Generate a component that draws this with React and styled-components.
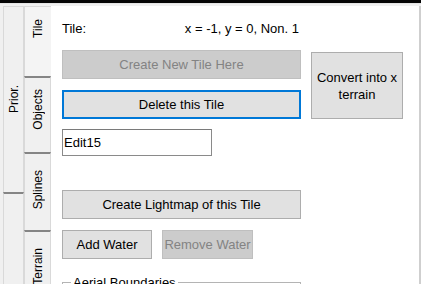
import React from "react";
import styled, { createGlobalStyle } from "styled-components";

const Global = createGlobalStyle`
  html, body { margin: 0; padding: 0; background: #f0f0f0; }
  * { box-sizing: border-box; }
`;

const Window = styled.div`
  width: 421px;
  height: 284px;
  overflow: hidden;
  display: flex;
  flex-direction: column;
  background: #f0f0f0;
  font-family: "Liberation Sans", Arial, sans-serif;
  font-size: 13px;
  color: #000;
`;

const TopBar = styled.div`
  height: 3px;
  background: #050505;
  flex: none;
`;

const Body = styled.div`
  flex: 1;
  display: flex;
  padding-top: 2px;
  border-top: 1px solid #e4e4e4;
  min-height: 0;
`;

const TabColumn = styled.div`
  flex: none;
  width: ${(p) => p.$width}px;
  padding-left: ${(p) => p.$pad || 0}px;
  display: flex;
  flex-direction: column;
`;

const Tab = styled.div`
  flex: ${(p) => (p.$grow ? "1 1 auto" : "none")};
  height: ${(p) => (p.$height ? `${p.$height}px` : "auto")};
  background: ${(p) => (p.$active ? "#f4f4f4" : "#f0f0f0")};
  border-left: 1px solid #d9d9d9;
  border-right: ${(p) => (p.$active ? "none" : "1px solid #d9d9d9")};
  border-top: ${(p) => (p.$first ? "1px solid #d9d9d9" : "2px solid #858585")};
  display: flex;
  align-items: center;
  justify-content: center;
  padding-bottom: ${(p) => p.$shift || 0}px;
`;

const TabLabel = styled.span`
  writing-mode: vertical-rl;
  transform: rotate(180deg);
  font-size: 12px;
  line-height: 14px;
  white-space: nowrap;
`;

const Content = styled.div`
  flex: 1;
  background: #fff;
  border-right: 2px solid #cfcfcf;
  padding: 15px 0 0 11px;
  display: flex;
  flex-direction: column;
  min-width: 0;
  & > * { flex-shrink: 0; }
`;

const TopSection = styled.div`
  display: flex;
  gap: 10px;
  align-items: flex-start;
`;

const LeftCol = styled.div`
  width: 239px;
  display: flex;
  flex-direction: column;
`;

const InfoRow = styled.div`
  height: 15px;
  line-height: 15px;
  display: flex;
  justify-content: space-between;
  padding-right: 2px;
`;

const Button = styled.button`
  font-family: inherit;
  font-size: 13px;
  width: ${(p) => p.$w}px;
  height: ${(p) => p.$h || 29}px;
  margin: ${(p) => p.$mt || 0}px 0 0 0;
  padding: 0;
  line-height: 17px;
  text-align: center;
  background: ${(p) => (p.disabled ? "#cccccc" : "#e1e1e1")};
  color: ${(p) => (p.disabled ? "#838383" : "#000")};
  border: ${(p) =>
    p.$focused ? "2px solid #0078d7" : p.disabled ? "1px solid #bfbfbf" : "1px solid #adadad"};
  border-radius: 0;
  outline: none;
  flex: none;
  align-self: flex-start;
`;

const EditBox = styled.input`
  width: 150px;
  height: 27px;
  margin-top: 10px;
  border: 1px solid #8a8a8a;
  border-top-color: #7a7a7a;
  background: #fff;
  font-family: inherit;
  font-size: 13px;
  padding: 0 0 0 1px;
  color: #000;
  outline: none;
`;

const Row = styled.div`
  display: flex;
  gap: 10px;
  margin-top: ${(p) => p.$mt || 0}px;
`;

const GroupBox = styled.fieldset`
  width: 239px;
  margin: 16px 0 0 0;
  padding: 0 0 20px 8px;
  border: 1px solid #b4b4b4;
  min-height: 40px;
`;

const GroupCaption = styled.legend`
  padding: 0 2px;
  line-height: 15px;
  font-size: 13px;
`;

export default function App() {
  return (
    <>
      <Global />
      <Window>
        <TopBar />
        <Body>
          <TabColumn $width={24} $pad={3}>
            <Tab $first $height={186}>
              <TabLabel>Prior.</TabLabel>
            </Tab>
            <Tab $grow />
          </TabColumn>
          <TabColumn $width={27}>
            <Tab $first $active $height={70} $shift={26}>
              <TabLabel>Tile</TabLabel>
            </Tab>
            <Tab $height={76} $shift={12}>
              <TabLabel>Objects</TabLabel>
            </Tab>
            <Tab $height={78} $shift={4}>
              <TabLabel>Splines</TabLabel>
            </Tab>
            <Tab $height={70}>
              <TabLabel>Terrain</TabLabel>
            </Tab>
          </TabColumn>
          <Content>
            <TopSection>
              <LeftCol>
                <InfoRow>
                  <span>Tile:</span>
                  <span>x = -1, y = 0, Non. 1</span>
                </InfoRow>
                <Button $w={239} $mt={14} disabled>
                  Create New Tile Here
                </Button>
                <Button $w={239} $mt={11} $focused>
                  Delete this Tile
                </Button>
              </LeftCol>
              <Button $w={92} $h={67} $mt={31}>
                Convert into x
                <br />
                terrain
              </Button>
            </TopSection>
            <EditBox readOnly value="Edit15" />
            <Button $w={239} $mt={34}>
              Create Lightmap of this Tile
            </Button>
            <Row $mt={11}>
              <Button $w={90}>Add Water</Button>
              <Button $w={91} disabled>
                Remove Water
              </Button>
            </Row>
            <GroupBox>
              <GroupCaption>Aerial Boundaries</GroupCaption>
            </GroupBox>
          </Content>
        </Body>
      </Window>
    </>
  );
}
